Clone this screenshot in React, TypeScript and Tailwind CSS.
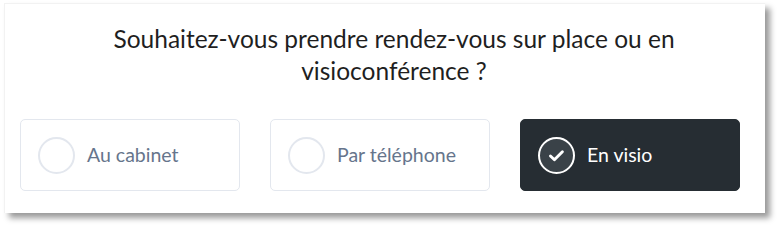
const options = [
  { id: "cabinet", label: "Au cabinet" },
  { id: "phone", label: "Par téléphone" },
  { id: "visio", label: "En visio" },
];

function Radio({ checked }: { checked: boolean }) {
  if (checked) {
    return (
      <span className="flex h-[37px] w-[37px] shrink-0 items-center justify-center rounded-full border-2 border-white bg-[#3a4248]">
        <svg viewBox="0 0 16 16" className="h-[21px] w-[21px]" fill="none">
          <path
            d="M3.4 8.4l3 2.9 6.1-6.2"
            stroke="white"
            strokeWidth="2.2"
            strokeLinecap="round"
            strokeLinejoin="round"
          />
        </svg>
      </span>
    );
  }
  return (
    <span className="h-[37px] w-[37px] shrink-0 rounded-full border-2 border-[#e3e7ee] bg-white" />
  );
}

export default function App() {
  const selected = "visio";
  return (
    <div className="h-[226px] w-[778px] bg-white pl-[4px] pt-[3px] font-['Lato','Noto_Sans',sans-serif]">
      <div className="flex h-[210px] w-[761px] flex-col items-center border-l border-t border-[#f2f2f2] bg-white pt-[19px] shadow-[5px_5px_6px_rgba(0,0,0,0.4)]">
        <h1 className="w-[640px] pl-[18px] text-center text-[24.5px] leading-[32px] text-[#1f1f1f]">
          Souhaitez-vous prendre rendez-vous sur place ou en visioconférence ?
        </h1>
        <div className="mt-[32px] flex w-full gap-[30px] px-[15px]">
          {options.map((o) => {
            const active = o.id === selected;
            return (
              <button
                key={o.id}
                className={
                  active
                    ? "flex h-[72px] w-[220px] items-center gap-[12px] rounded-[5px] border border-[#262d33] bg-[#262d33] pl-[17px] text-[19.5px] text-white"
                    : "flex h-[72px] w-[220px] items-center gap-[12px] rounded-[5px] border border-[#e3e7ee] bg-white pl-[17px] text-[19.5px] text-[#66758c]"
                }
              >
                <Radio checked={active} />
                <span>{o.label}</span>
              </button>
            );
          })}
        </div>
      </div>
    </div>
  );
}
